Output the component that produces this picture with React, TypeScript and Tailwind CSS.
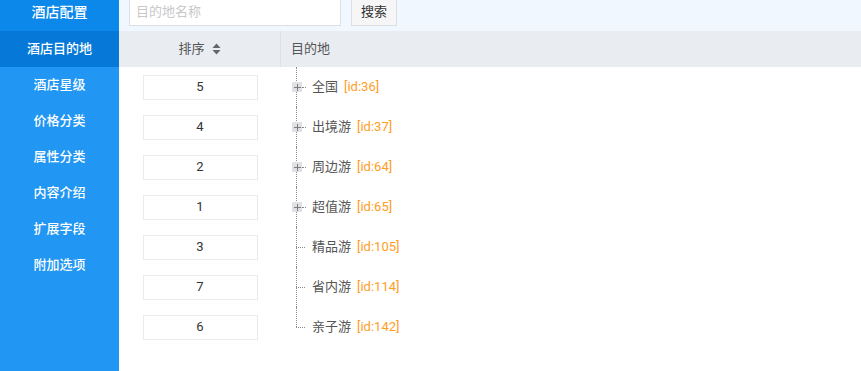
import React from "react";

const menu = ["酒店星级", "价格分类", "属性分类", "内容介绍", "扩展字段", "附加选项"];

type Node = { sort: number; name: string; id: number; folder: boolean };

const nodes: Node[] = [
  { sort: 5, name: "全国", id: 36, folder: true },
  { sort: 4, name: "出境游", id: 37, folder: true },
  { sort: 2, name: "周边游", id: 64, folder: true },
  { sort: 1, name: "超值游", id: 65, folder: true },
  { sort: 3, name: "精品游", id: 105, folder: false },
  { sort: 7, name: "省内游", id: 114, folder: false },
  { sort: 6, name: "亲子游", id: 142, folder: false },
];

const font = { fontFamily: 'Roboto, "Noto Sans CJK SC", sans-serif' };

const SortIcon = () => (
  <svg width="9" height="12" viewBox="0 0 9 12" className="text-[#666]">
    <path d="M4.5 0.5 L8.5 5 H0.5 Z" fill="currentColor" />
    <path d="M4.5 11.5 L8.5 7 H0.5 Z" fill="currentColor" />
  </svg>
);

const App: React.FC = () => {
  return (
    <div className="flex w-[861px] h-[371px] overflow-hidden bg-white" style={font}>
      {/* sidebar */}
      <div className="w-[119px] shrink-0 bg-[#2196f3] text-white">
        <div className="h-[31px] pb-[7px] flex items-center justify-center bg-[#0b88e9] text-[14px] font-medium">
          酒店配置
        </div>
        <div className="h-[36px] flex items-center justify-center bg-[#0679d8] text-[13px] font-medium">
          酒店目的地
        </div>
        {menu.map((m) => (
          <div key={m} className="h-[36px] flex items-center justify-center text-[13px] font-medium">
            {m}
          </div>
        ))}
      </div>

      {/* main */}
      <div className="flex-1 flex flex-col">
        <div className="h-[31px] bg-[#f0f7fe] flex items-start pl-[10px]">
          <div className="w-[212px] h-[26px] bg-white border-x border-b border-[#dcdfe4] flex items-center px-[6px] pb-[2px] text-[13px] text-[#c8c8c8]">
            目的地名称
          </div>
          <div className="ml-[10px] w-[46px] h-[26px] bg-[#f6f6f6] border-x border-b border-[#dcdfe4] flex items-center justify-center pb-[2px] text-[13px] text-[#333]">
            搜索
          </div>
        </div>

        <div className="h-[36px] bg-[#e9ecf1] flex text-[13px] text-[#555]">
          <div className="w-[162px] border-r border-[#dde1e7] flex items-center justify-center gap-[7px]">
            <span>排序</span>
            <SortIcon />
          </div>
          <div className="flex items-center pl-[10px]">目的地</div>
        </div>

        <div className="flex">
          <div className="w-[162px]">
            {nodes.map((n) => (
              <div key={n.id} className="h-[40px] flex items-center justify-center">
                <div className="w-[115px] h-[25px] border border-[#ebebeb] flex items-center justify-center text-[13px] text-[#333]">
                  {n.sort}
                </div>
              </div>
            ))}
          </div>
          <div className="flex-1">
            {nodes.map((n, i) => (
              <div key={n.id} className="relative h-[40px] flex items-center pl-[11px] text-[13px]">
                <div
                  className={`absolute left-[15px] top-0 border-l border-dotted border-[#8a8a8a] ${
                    i === nodes.length - 1 ? "h-[20px]" : "h-[40px]"
                  }`}
                />
                {n.folder ? (
                  <>
                    <div className="relative w-[10px] h-[10px] bg-[#dfe1e4] flex items-center justify-center">
                      <div className="absolute w-[7px] h-px bg-[#7d7d7d]" />
                      <div className="absolute w-px h-[7px] bg-[#7d7d7d]" />
                    </div>
                    <div className="w-[4px] border-t border-dotted border-[#8a8a8a]" />
                    <div className="w-[6px]" />
                  </>
                ) : (
                  <>
                    <div className="w-[4px]" />
                    <div className="w-[9px] border-t border-dotted border-[#8a8a8a]" />
                    <div className="w-[7px]" />
                  </>
                )}
                <span className="text-[#555]">{n.name}</span>
                <span className="ml-[6px] text-[#ff9d1e]">[id:{n.id}]</span>
              </div>
            ))}
          </div>
        </div>
      </div>
    </div>
  );
};

export default App;
